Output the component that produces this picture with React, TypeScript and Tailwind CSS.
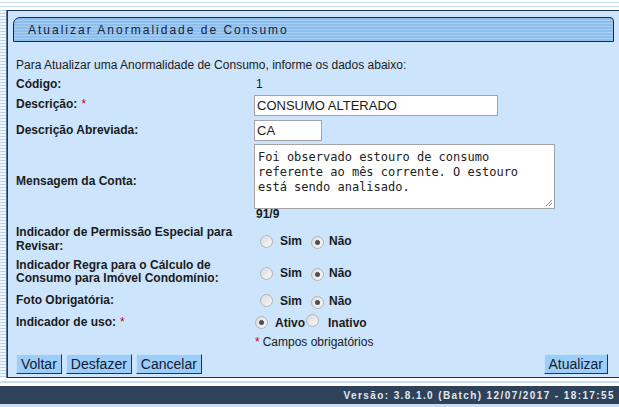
import React from "react"

// GSAN-style form: Atualizar Anormalidade de Consumo

const Req = () => <span className="text-[#cc0000] font-normal ml-[4px]">*</span>

const Radio = ({ checked }: { checked?: boolean }) => (
  <span className="inline-flex items-center justify-center w-[13px] h-[13px] rounded-full border border-[#b4b4b4] bg-gradient-to-br from-[#dcdcdc] to-[#f7f7f7] shrink-0">
    {checked && <span className="w-[5px] h-[5px] rounded-full bg-[#505050]" />}
  </span>
)

const SimNao = () => (
  <div className="flex items-center pl-[6px] font-bold">
    <Radio />
    <span className="ml-[7px]">Sim</span>
    <span className="ml-[9px]"><Radio checked /></span>
    <span className="ml-[5px]">Não</span>
  </div>
)

const Btn = ({ children }: { children: React.ReactNode }) => (
  <button className="h-[20px] px-[4px] bg-[#9dcdf9] border border-[#c8e2fb] border-b-[#1d3657] border-r-[#1d3657] text-[14px] leading-[18px] text-[#111c30] font-['Liberation_Sans',Arial,sans-serif]">
    {children}
  </button>
)

export default function App() {
  return (
    <div className="w-[619px] h-[407px] bg-white overflow-hidden font-['Liberation_Sans',Arial,sans-serif] text-[12px] text-[#1b1b1b]">
      {/* top lines */}
      <div className="h-[10px] pt-[2px]">
        <div className="h-[1px] bg-[#c9def2]" />
        <div className="h-[1px] bg-[#c9def2] mt-[3px]" />
      </div>

      <div className="flex h-[368px]">
        <div className="w-[7px] bg-[repeating-linear-gradient(180deg,#b9d3ec_0px,#b9d3ec_1px,#f2f7fc_1px,#f2f7fc_3px)] border-r border-[#5a7393]" />

        <div className="flex-1 bg-[#cce5fc] border-t border-b border-l border-[#1f3550] flex flex-col">
          {/* title bar */}
          <div className="ml-[5px] mt-[6px] w-[601px] h-[25px] border border-[#1a2b45] rounded-tl-[7px] rounded-tr-[4px] bg-[repeating-linear-gradient(180deg,#8dbeec_0px,#8dbeec_2px,#a7cff4_2px,#a7cff4_3px)] flex items-center pl-[14px]">
            <span className="text-[12px] tracking-[2px] text-[#16233b]">Atualizar Anormalidade de Consumo</span>
          </div>

          <div className="px-[8px] flex flex-col">
            <div className="mt-[16px] h-[14px] leading-[14px]">
              Para Atualizar uma Anormalidade de Consumo, informe os dados abaixo:
            </div>

            <div className="grid grid-cols-[238px_1fr] font-bold">
              <div className="mt-[5px] h-[14px] leading-[14px]">Código:</div>
              <div className="mt-[5px] h-[14px] leading-[14px] pl-[2px] font-normal">1</div>

              <div className="h-[24px] mt-[2px] flex items-center pb-[3px]">Descrição:<Req /></div>
              <div className="h-[24px] mt-[2px] flex items-center">
                <div className="w-[244px] h-[21px] bg-white border border-[#a3a3a3] text-[13px] font-normal leading-[19px] pl-[2px]">CONSUMO ALTERADO</div>
              </div>

              <div className="h-[24px] mt-[1px] flex items-center pb-[1px]">Descrição Abreviada:</div>
              <div className="h-[24px] mt-[1px] flex items-center">
                <div className="w-[68px] h-[21px] bg-white border border-[#a3a3a3] text-[13px] font-normal leading-[19px] pl-[2px]">CA</div>
              </div>

              <div className="h-[78px] flex items-center">Mensagem da Conta:</div>
              <div className="h-[78px] pt-[2px]">
                <div className="relative w-[301px] h-[65px] bg-white border border-[#a3a3a3] font-['DejaVu_Sans_Mono',monospace] text-[12px] font-normal leading-[15px] pl-[3px] pt-[5px] text-[#222]">
                  Foi observado estouro de consumo<br />referente ao mês corrente. O estouro<br />está sendo analisado.
                  <svg className="absolute right-[1px] bottom-[1px]" width="8" height="8" viewBox="0 0 8 8">
                    <path d="M7 1L1 7M7 4L4 7" stroke="#888" strokeWidth="1" />
                  </svg>
                </div>
                <div className="leading-[12px] mt-[-1px] pl-[2px]">91/9</div>
              </div>

              <div className="h-[37px] flex items-center">
                <div className="leading-[14px]">Indicador de Permissão Especial para<br />Revisar:</div>
              </div>
              <div className="h-[37px] flex items-center pt-[5px]"><SimNao /></div>

              <div className="h-[30px] flex items-center">
                <div className="leading-[13px]">Indicador Regra para o Cálculo de<br />Consumo para Imóvel Condomínio:</div>
              </div>
              <div className="h-[30px] flex items-center pt-[2px]"><SimNao /></div>

              <div className="h-[25px] flex items-center">Foto Obrigatória:</div>
              <div className="h-[25px] flex items-center pt-[2px]"><SimNao /></div>

              <div className="h-[20px] flex items-center">Indicador de uso:<Req /></div>
              <div className="h-[20px] flex items-center pl-[1px] pt-[1px]">
                <Radio checked />
                <span className="ml-[7px]">Ativo</span>
                <span className="ml-[1px]"><Radio /></span>
                <span className="ml-[9px]">Inativo</span>
              </div>

              <div className="h-[20px]" />
              <div className="h-[20px] flex items-center pl-[1px] font-normal">
                <span className="text-[#cc0000]">*</span>
                <span className="ml-[3px]">Campos obrigatórios</span>
              </div>
            </div>

            <div className="mt-[2px] flex items-center">
              <div className="flex gap-[4px]">
                <Btn>Voltar</Btn>
                <Btn>Desfazer</Btn>
                <Btn>Cancelar</Btn>
              </div>
              <div className="ml-auto mr-[3px]">
                <Btn>Atualizar</Btn>
              </div>
            </div>
          </div>
        </div>
      </div>

      {/* footer */}
      <div className="h-[8px] pt-[3px]">
        <div className="h-[2px] bg-[#c9def2]" />
      </div>
      <div className="h-[18px] bg-[#2e4359] flex items-center justify-end pr-[4px]">
        <span className="text-[10px] font-bold tracking-[1.4px] text-[#e2e8ef]">Versão: 3.8.1.0 (Batch) 12/07/2017 - 18:17:55</span>
      </div>
      <div className="h-[3px] bg-[#c9def2]" />
    </div>
  )
}
